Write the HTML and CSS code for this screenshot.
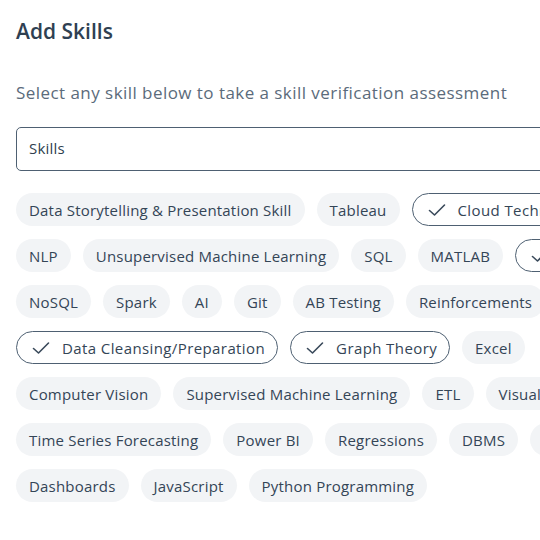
FILE: index.html
```html
<!DOCTYPE html>
<html lang="en">
<head>
<meta charset="utf-8">
<title>Add Skills</title>
<link rel="stylesheet" href="styles.css">
</head>
<body>
<main class="panel">
  <h1 class="title">Add Skills</h1>
  <p class="subtitle">Select any skill below to take a skill verification assessment</p>
  <div class="search"><span class="search-text">Skills</span></div>
  <div class="chips">
    <div class="row">
      <span class="chip">Data Storytelling &amp; Presentation Skill</span>
      <span class="chip">Tableau</span>
      <span class="chip selected"><svg class="check" viewBox="0 0 18 14"><path d="M1.5 7.5 L6.5 12 L16.5 2"/></svg>Cloud Technologies</span>
    </div>
    <div class="row">
      <span class="chip">NLP</span>
      <span class="chip">Unsupervised Machine Learning</span>
      <span class="chip">SQL</span>
      <span class="chip">MATLAB</span>
      <span class="chip selected"><svg class="check" viewBox="0 0 18 14"><path d="M1.5 7.5 L6.5 12 L16.5 2"/></svg>Deep Learning</span>
    </div>
    <div class="row">
      <span class="chip">NoSQL</span>
      <span class="chip">Spark</span>
      <span class="chip">AI</span>
      <span class="chip">Git</span>
      <span class="chip">AB Testing</span>
      <span class="chip">Reinforcements</span>
    </div>
    <div class="row">
      <span class="chip selected"><svg class="check" viewBox="0 0 18 14"><path d="M1.5 7.5 L6.5 12 L16.5 2"/></svg>Data Cleansing/Preparation</span>
      <span class="chip selected"><svg class="check" viewBox="0 0 18 14"><path d="M1.5 7.5 L6.5 12 L16.5 2"/></svg>Graph Theory</span>
      <span class="chip">Excel</span>
    </div>
    <div class="row">
      <span class="chip">Computer Vision</span>
      <span class="chip">Supervised Machine Learning</span>
      <span class="chip">ETL</span>
      <span class="chip">Visualization</span>
    </div>
    <div class="row">
      <span class="chip">Time Series Forecasting</span>
      <span class="chip">Power BI</span>
      <span class="chip">Regressions</span>
      <span class="chip">DBMS</span>
      <span class="chip">R</span>
    </div>
    <div class="row">
      <span class="chip">Dashboards</span>
      <span class="chip">JavaScript</span>
      <span class="chip">Python Programming</span>
    </div>
  </div>
</main>
</body>
</html>
```

FILE: styles.css
```css
html, body {
  margin: 0;
  padding: 0;
  background: #ffffff;
  overflow: hidden;
}
body {
  width: 540px;
  height: 540px;
  font-family: "Open Sans", "Noto Sans", sans-serif;
}
.panel {
  width: 760px;
  padding: 16px 0 0 16px;
  box-sizing: border-box;
}
.title {
  margin: 0;
  font-size: 21px;
  line-height: 30px;
  font-weight: 600;
  color: #2f4052;
}
.subtitle {
  margin: 31px 0 0;
  font-size: 17px;
  letter-spacing: 0.45px;
  line-height: 32px;
  font-weight: 400;
  color: #5b6b7b;
}
.search {
  margin-top: 18px;
  height: 44px;
  box-sizing: border-box;
  border: 1.5px solid #4e6072;
  border-radius: 5px;
  display: flex;
  align-items: center;
  padding: 0 0 3px 12px;
}
.search-text {
  font-size: 15px;
  letter-spacing: 0.2px;
  color: #2f3f4f;
}
.chips {
  margin-top: 22px;
  display: flex;
  flex-direction: column;
  gap: 13px;
}
.row {
  display: flex;
  gap: 12px;
}
.chip {
  flex: none;
  height: 33px;
  box-sizing: border-box;
  padding: 0 13px;
  border-radius: 17px;
  background: #f2f4f6;
  color: #344556;
  font-size: 15px;
  letter-spacing: 0.2px;
  display: flex;
  align-items: center;
  white-space: nowrap;
}
.chip.selected {
  background: #ffffff;
  border: 1px solid #4e6072;
  padding: 0 12px 0 15px;
  letter-spacing: 0.4px;
}
.check {
  width: 18px;
  height: 14px;
  margin-right: 12px;
  fill: none;
  stroke: #3a4a5b;
  stroke-width: 1.6;
  stroke-linecap: round;
  stroke-linejoin: round;
}
```
